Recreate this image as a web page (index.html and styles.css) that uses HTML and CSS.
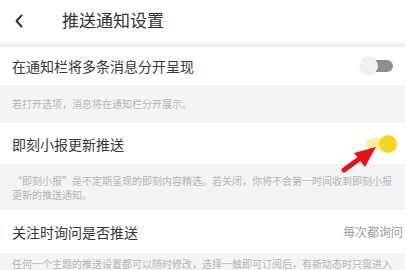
FILE: index.html
```html
<!DOCTYPE html>
<html lang="zh">
<head>
<meta charset="utf-8">
<link rel="stylesheet" href="styles.css">
</head>
<body>
<div class="page">
  <header class="header">
    <svg class="back" width="10" height="14" viewBox="0 0 10 14"><path d="M7.5 1.5 L2.5 7 L7.5 12.5" fill="none" stroke="#333" stroke-width="2" stroke-linecap="round" stroke-linejoin="round"/></svg>
    <div class="title">推送通知设置</div>
  </header>
  <div class="row r1">
    <span class="label">在通知栏将多条消息分开呈现</span>
    <span class="toggle off"><span class="track"></span><span class="knob"></span></span>
  </div>
  <div class="desc d1">若打开选项，消息将在通知栏分开展示。</div>
  <div class="row r2">
    <span class="label">即刻小报更新推送</span>
    <span class="toggle on"><span class="track"></span><span class="knob"></span></span>
  </div>
  <div class="desc d2">“即刻小报”是不定期呈现的即刻内容精选。若关闭，你将不会第一时间收到即刻小报<br>更新的推送通知。</div>
  <div class="row r3">
    <span class="label">关注时询问是否推送</span>
    <span class="value">每次都询问</span>
  </div>
  <div class="desc d3">任何一个主题的推送设置都可以随时修改，选择一触即可订阅后，有新动态时只需进入</div>
  <svg class="arrow" width="50" height="40" viewBox="0 0 50 40"><path d="M4 30 L22 17" stroke="#e8101a" stroke-width="5" stroke-linecap="round"/><polygon points="36,7 14,13 25,27" fill="#e8101a"/></svg>
</div>
</body>
</html>
```
FILE: styles.css
```css
html, body { margin: 0; padding: 0; background: #fff; }
body { font-family: "Noto Sans CJK SC", "Noto Sans", sans-serif; color: #333; }
.page { width: 405px; height: 270px; overflow: hidden; position: relative; }
.header { height: 43px; display: flex; align-items: center; border-bottom: 4px solid #efefef; box-sizing: content-box; }
.back { margin-left: 14px; margin-top: -2px; }
.title { margin-left: 38px; font-size: 17px; line-height: 20px; margin-top: -3px; color: #333; }
.row { display: flex; align-items: center; justify-content: space-between; padding: 0 0 0 12px; background: #fff; }
.r1 { height: 38px; }
.r2 { height: 41px; }
.r3 { height: 43px; }
.label { font-size: 14px; line-height: 18px; color: #383838; }
.desc { background: #f3f4f6; font-size: 10px; color: #b4b4b4; padding-left: 12px; line-height: 14px; }
.d1 { height: 38px; display: flex; align-items: center; }
.d2 { height: 46px; box-sizing: border-box; padding-top: 10px; }
.d3 { height: 20px; box-sizing: border-box; padding-top: 4px; white-space: nowrap; }
.value { font-size: 12px; color: #9a9a9a; margin-right: 2px; }
.toggle { position: relative; width: 34px; height: 20px; }
.toggle .track { position: absolute; top: 4px; height: 12px; border-radius: 6px; }
.toggle .knob { position: absolute; top: 1px; width: 18px; height: 18px; border-radius: 50%; }
.off { margin-right: 11px; }
.off .track { left: 4px; width: 29px; background: #8e8e8e; }
.off .knob { left: 0; background: #f0f0f0; box-shadow: 0 0 2px rgba(0,0,0,0.15); }
.on { margin-right: 5px; }
.on .track { left: 0; width: 28px; background: #faeea5; }
.on .knob { left: 13px; background: #f6d623; }
.arrow { position: absolute; left: 340px; top: 140px; }
```
